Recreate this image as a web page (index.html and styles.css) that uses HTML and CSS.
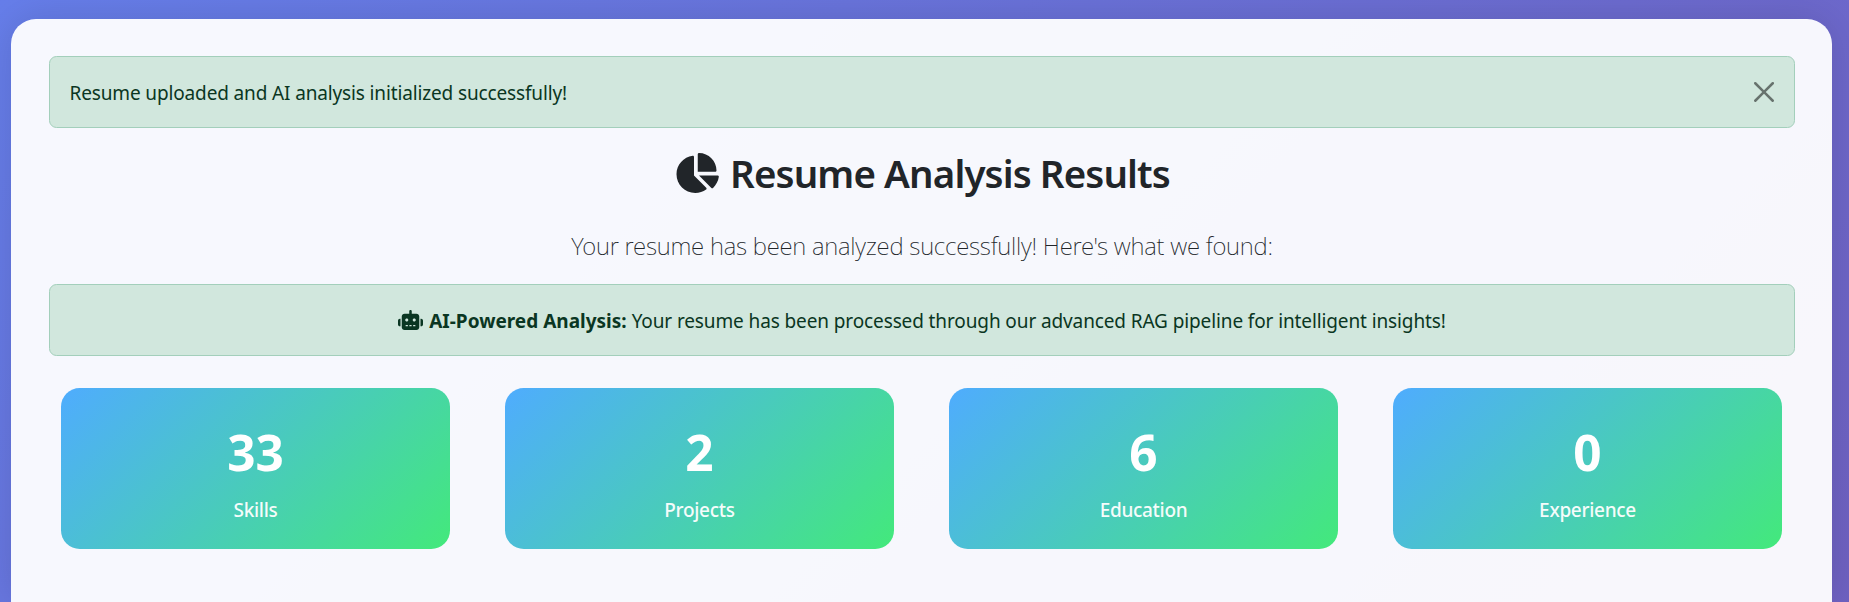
FILE: index.html
```html
<!DOCTYPE html>
<html lang="en">
<head>
<meta charset="utf-8">
<title>Resume Analysis Results</title>
<link rel="stylesheet" href="styles.css">
</head>
<body>
<main class="panel">
  <div class="alert alert-dismissible">
    <span class="alert-text">Resume uploaded and AI analysis initialized successfully!</span>
    <button class="close" type="button" aria-label="Close">
      <svg viewBox="0 0 16 16"><path d="M.293.293a1 1 0 0 1 1.414 0L8 6.586 14.293.293a1 1 0 1 1 1.414 1.414L9.414 8l6.293 6.293a1 1 0 0 1-1.414 1.414L8 9.414l-6.293 6.293a1 1 0 0 1-1.414-1.414L6.586 8 .293 1.707a1 1 0 0 1 0-1.414z"/></svg>
    </button>
  </div>
  <h1 class="title">
    <svg class="title-icon" viewBox="0 0 576 512"><path d="M304 240V16.6c0-9 7-16.6 16-16.6C443.7 0 544 100.3 544 224c0 9-7.6 16-16.6 16H304zM32 272C32 150.7 122.1 50.3 239 34.3c9.2-1.3 17 6.1 17 15.4V288L412.5 444.5c6.7 6.7 6.2 17.7-1.5 23.1C371.8 495.6 323.8 512 272 512C139.5 512 32 404.6 32 272zm526.4 16c9.3 0 16.6 7.8 15.4 17c-7.7 55.9-34.6 105.6-73.9 142.3c-6 5.6-15.4 5.2-21.2-.7L320 288H558.4z"/></svg>
    <span class="title-text">Resume Analysis Results</span>
  </h1>
  <p class="lead">Your resume has been analyzed successfully! Here's what we found:</p>
  <div class="alert alert-info">
    <svg class="robot" viewBox="0 0 640 512"><path d="M320 0c17.700 0 32 14.300 32 32V96H472c39.800 0 72 32.200 72 72V440c0 39.800-32.200 72-72 72H168c-39.800 0-72-32.200-72-72V168c0-39.800 32.200-72 72-72H288V32c0-17.700 14.300-32 32-32zM208 384c-8.800 0-16 7.200-16 16s7.200 16 16 16h32c8.800 0 16-7.200 16-16s-7.200-16-16-16H208zm96 0c-8.800 0-16 7.200-16 16s7.200 16 16 16h32c8.800 0 16-7.200 16-16s-7.200-16-16-16H304zm96 0c-8.800 0-16 7.200-16 16s7.200 16 16 16h32c8.800 0 16-7.200 16-16s-7.200-16-16-16H400zM264 256c0-22.100-17.900-40-40-40s-40 17.900-40 40s17.900 40 40 40s40-17.900 40-40zm152 40c22.100 0 40-17.900 40-40s-17.900-40-40-40s-40 17.900-40 40s17.900 40 40 40zM48 224H64V416H48c-26.500 0-48-21.500-48-48V272c0-26.500 21.500-48 48-48zm544 0c26.500 0 48 21.500 48 48v96c0 26.500-21.500 48-48 48H576V224h16z"/></svg>
    <strong class="info-label">AI-Powered Analysis:</strong>
    <span class="info-text">Your resume has been processed through our advanced RAG pipeline for intelligent insights!</span>
  </div>
  <section class="stats">
    <div class="stat"><div class="stat-number">33</div><div class="stat-label">Skills</div></div>
    <div class="stat"><div class="stat-number">2</div><div class="stat-label">Projects</div></div>
    <div class="stat"><div class="stat-number">6</div><div class="stat-label">Education</div></div>
    <div class="stat"><div class="stat-number">0</div><div class="stat-label">Experience</div></div>
  </section>
</main>
</body>
</html>
```
FILE: styles.css
```css
* { box-sizing: border-box; }
html, body { height: 100%; }
body {
  margin: 0;
  padding: 19px 17px 0 11px;
  overflow: hidden;
  background: linear-gradient(135deg, #667eea 0%, #764ba2 100%) 0 0 / 1849px 2500px no-repeat;
  font-family: "Noto Sans", "Open Sans", sans-serif;
  font-size: 19px;
  color: #212529;
}
.panel {
  height: 100%;
  padding: 37px 37px 0 38px;
  border-radius: 25px 25px 0 0;
  background: rgba(255, 255, 255, 0.95);
  box-shadow: 0 0 40px rgba(0, 0, 0, 0.13);
}
.alert {
  display: flex;
  align-items: center;
  height: 72px;
  border: 1px solid #a3cfbb;
  border-radius: 7.5px;
  background: #d1e7dd;
  color: #0a3622;
  line-height: 30px;
  white-space: nowrap;
}
.alert-dismissible {
  justify-content: space-between;
  padding: 0 20px 0 19.5px;
}
.alert-text { padding-top: 2px; letter-spacing: -0.14px; }
.close {
  display: flex;
  padding: 0;
  border: 0;
  background: none;
  opacity: 0.5;
}
.close svg { width: 20px; height: 20px; }
.title {
  display: flex;
  justify-content: center;
  align-items: center;
  gap: 11px;
  height: 48px;
  margin: 21px 0 0;
  font-size: 38.5px;
  font-weight: 600;
  line-height: 48px;
  white-space: nowrap;
}
.title-icon { width: 45px; height: 40px; fill: #212529; }
.title-text { letter-spacing: -0.9px; }
.lead {
  height: 38px;
  margin: 30px 0 19px;
  text-align: center;
  font-size: 24px;
  font-weight: 250;
  line-height: 38px;
  letter-spacing: -0.24px;
  white-space: nowrap;
}
.alert-info { justify-content: center; }
.robot { width: 25px; height: 20px; margin-right: 6px; fill: #0a3622; }
.info-label { padding-top: 2px; margin-right: 5px; }
.info-text { padding-top: 2px; letter-spacing: -0.115px; }
.stats {
  display: grid;
  grid-template-columns: repeat(4, 389px);
  gap: 55px;
  margin: 32px 0 0 12px;
}
.stat {
  height: 161px;
  padding: 33px 0 0;
  border-radius: 18.75px;
  background: linear-gradient(135deg, #4facfe 0%, #43e97b 100%);
  color: #fff;
  text-align: center;
}
.stat-number { font-size: 49.5px; font-weight: 700; line-height: 62px; }
.stat-label { margin-top: 12px; font-weight: 500; line-height: 30px; letter-spacing: -0.3px; opacity: 0.95; }
```
